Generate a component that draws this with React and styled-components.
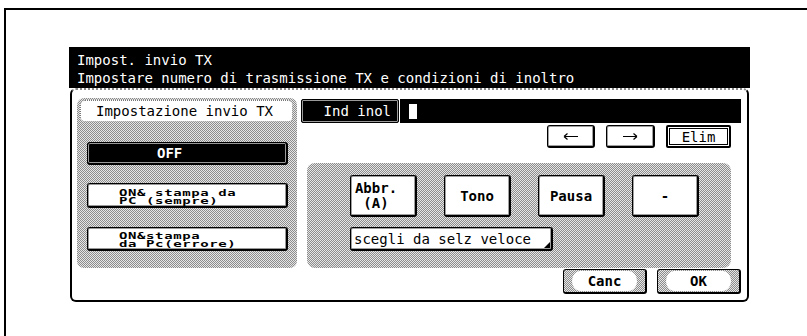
import React from "react";
import styled, { createGlobalStyle } from "styled-components";

// dithered grey used by the panels of the copier screen
const dither = `
  background-color: #c4c4c4;
  background-image: repeating-conic-gradient(#8c8c8c 0 25%, #e6e6e6 0 50%);
  background-size: 2px 2px;
`;

const GlobalStyle = createGlobalStyle`
  html, body {
    margin: 0;
    background: #fff;
  }
  body {
    font-family: "DejaVu Sans Mono", "Liberation Mono", monospace;
    color: #000;
  }
`;

// thin arrow used on the cursor keys
const Arrow = ({ dir }) => (
  <svg width="16" height="9" viewBox="0 0 16 9">
    {dir === "left" ? (
      <path d="M1 4.5H15M1 4.5L4.5 1.5M1 4.5L4.5 7.5" stroke="#000" strokeWidth="1.2" fill="none" />
    ) : (
      <path d="M1 4.5H15M15 4.5L11.5 1.5M15 4.5L11.5 7.5" stroke="#000" strokeWidth="1.2" fill="none" />
    )}
  </svg>
);

const App = () => {
  return (
    <>
      <GlobalStyle />
      <Frame>
        <Screen>
          <Header>
            <div>Impost. invio TX</div>
            <div>Impostare numero di trasmissione TX e condizioni di inoltro</div>
          </Header>
          <Dialog>
            <LeftPanel>
              <Tab>Impostazione invio TX</Tab>
              <OptionButton $dark $mt={20} $h={23}>
                <OffLabel>OFF</OffLabel>
              </OptionButton>
              <OptionButton $mt={18} $h={25}>
                <SmallLabel>{"ON& stampa da\nPC (sempre)"}</SmallLabel>
              </OptionButton>
              <OptionButton $mt={19} $h={24}>
                <SmallLabel>{"ON&stampa\nda Pc(errore)"}</SmallLabel>
              </OptionButton>
            </LeftPanel>

            <RightCol>
              <InputRow>
                <IndLabel>Ind inol</IndLabel>
                <Field>
                  <Cursor />
                </Field>
              </InputRow>

              <ArrowRow>
                <Key $w={48} $h={23}>
                  <Arrow dir="left" />
                </Key>
                <Key $w={49} $h={23}>
                  <Arrow dir="right" />
                </Key>
                <ElimKey>Elim</ElimKey>
              </ArrowRow>

              <RightPanel>
                <KeyRow>
                  <Key $w={67} $h={42} $bold>
                    <AbbrLabel>{"Abbr.\n (A)"}</AbbrLabel>
                  </Key>
                  <Key $w={67} $h={42} $bold>Tono</Key>
                  <Key $w={67} $h={42} $bold>Pausa</Key>
                  <Key $w={67} $h={42} $bold>-</Key>
                </KeyRow>
                <SpeedKey>scegli da selz veloce</SpeedKey>
              </RightPanel>

              <Footer>
                <ActionButton>
                  <ActionFace>Canc</ActionFace>
                </ActionButton>
                <ActionButton>
                  <ActionFace>OK</ActionFace>
                </ActionButton>
              </Footer>
            </RightCol>
          </Dialog>
        </Screen>
      </Frame>
    </>
  );
};

export default App;

const Frame = styled.div`
  box-sizing: border-box;
  height: 328px;
  margin: 8px 0 0 4px;
  border-top: 2px solid #000;
  border-left: 2px solid #000;
  padding: 37px 0 0 63px;
`;

const Screen = styled.div`
  width: 681px;
`;

const Header = styled.div`
  box-sizing: border-box;
  height: 41px;
  background: #000;
  color: #fff;
  padding: 4px 8px 0;
  font-size: 14px;
  line-height: 18px;
  white-space: pre;
`;

const Dialog = styled.div`
  box-sizing: border-box;
  width: 679px;
  height: 214px;
  margin-left: 1px;
  background: #fff;
  border: 2px solid #000;
  border-top: 2px dotted #8a8a8a;
  border-radius: 6px;
  display: grid;
  grid-template-columns: 220px 440px;
  column-gap: 4px;
  align-items: start;
  padding: 8px 6px 6px 5px;
`;

const LeftPanel = styled.div`
  ${dither}
  box-sizing: border-box;
  height: 170px;
  border-radius: 7px;
  display: flex;
  flex-direction: column;
  padding: 2px 4px 0 3px;
`;

const Tab = styled.div`
  box-sizing: border-box;
  height: 22px;
  background: #fff;
  border: 1px dotted #777;
  border-radius: 5px;
  display: flex;
  align-items: center;
  justify-content: center;
  font-size: 14px;
  padding-right: 4px;
`;

const OptionButton = styled.div`
  box-sizing: border-box;
  width: 201px;
  height: ${p => p.$h}px;
  margin: ${p => p.$mt}px 0 0 7px;
  background: ${p => (p.$dark ? "#000" : "#fff")};
  color: ${p => (p.$dark ? "#fff" : "#000")};
  border: 1px solid #000;
  border-width: 1px 2px 2px 1px;
  border-radius: 3px;
  box-shadow: inset 0 0 0 1px #9a9a9a;
  display: flex;
  align-items: center;
  padding-left: ${p => (p.$dark ? 69 : 31)}px;
`;

const OffLabel = styled.span`
  font-size: 14px;
  font-weight: bold;
`;

const SmallLabel = styled.span`
  display: inline-block;
  font-size: 14px;
  letter-spacing: 0.6px;
  line-height: 11px;
  font-weight: bold;
  white-space: pre;
  transform: scaleY(0.68);
  transform-origin: left center;
  margin-top: 3px;
`;

const RightCol = styled.div`
  display: flex;
  flex-direction: column;
  padding-top: 1px;
`;

const InputRow = styled.div`
  display: flex;
  height: 24px;
  gap: 1px;
`;

const IndLabel = styled.div`
  box-sizing: border-box;
  width: 98px;
  background: #000;
  color: #fff;
  border: 1px solid #000;
  border-radius: 2px;
  box-shadow: inset 0 0 0 1px #9a9a9a;
  font-size: 14px;
  display: flex;
  align-items: center;
  justify-content: flex-end;
  padding-right: 7px;
`;

const Field = styled.div`
  flex: 1;
  background: #000;
  display: flex;
  align-items: center;
  padding-left: 9px;
`;

const Cursor = styled.span`
  width: 8px;
  height: 15px;
  background: #fff;
`;

const ArrowRow = styled.div`
  display: flex;
  justify-content: flex-end;
  gap: 11px;
  margin-top: 2px;
  padding-right: 10px;
`;

const Key = styled.div`
  box-sizing: border-box;
  width: ${p => p.$w}px;
  height: ${p => p.$h}px;
  background: #fff;
  border: 1px solid #000;
  border-width: 1px 2px 2px 1px;
  border-radius: 3px;
  box-shadow: inset 0 0 0 1px #a0a0a0;
  display: flex;
  align-items: center;
  justify-content: center;
  font-size: 14px;
  font-weight: ${p => (p.$bold ? "bold" : "normal")};
`;

const ElimKey = styled.div`
  box-sizing: border-box;
  width: 65px;
  height: 23px;
  background: #fff;
  border: 2px solid #000;
  border-radius: 2px;
  box-shadow: inset 0 0 0 1px #fff, inset 0 0 0 2px #000;
  display: flex;
  align-items: center;
  justify-content: center;
  font-size: 14px;
`;

const RightPanel = styled.div`
  ${dither}
  box-sizing: border-box;
  height: 105px;
  margin: 15px 10px 0 6px;
  border-radius: 8px;
  padding: 12px 0 0 43px;
  display: flex;
  flex-direction: column;
`;

const KeyRow = styled.div`
  display: flex;
  gap: 27px;
`;

const AbbrLabel = styled.span`
  white-space: pre;
  line-height: 15px;
  margin-right: 14px;
`;

const SpeedKey = styled.div`
  position: relative;
  box-sizing: border-box;
  width: 203px;
  height: 24px;
  margin-top: 10px;
  background: #fff;
  border: 1px solid #000;
  border-width: 1px 2px 2px 1px;
  border-radius: 3px;
  box-shadow: inset 0 0 0 1px #a0a0a0;
  display: flex;
  align-items: center;
  padding-left: 3px;
  font-size: 14px;

  &::after {
    content: "";
    position: absolute;
    right: 1px;
    bottom: 1px;
    border-style: solid;
    border-width: 0 0 6px 6px;
    border-color: transparent transparent #000 transparent;
  }
`;

const Footer = styled.div`
  display: flex;
  justify-content: flex-end;
  gap: 10px;
  margin-top: 1px;
`;

const ActionButton = styled.div`
  ${dither}
  box-sizing: border-box;
  width: 84px;
  height: 25px;
  border: 1px solid #000;
  border-width: 1px 2px 2px 1px;
  border-radius: 3px;
  padding: 1px 8px;
  display: flex;
`;

const ActionFace = styled.span`
  flex: 1;
  background: #fff;
  border-radius: 8px / 10px;
  display: flex;
  align-items: center;
  justify-content: center;
  font-size: 14px;
  font-weight: bold;
`;
